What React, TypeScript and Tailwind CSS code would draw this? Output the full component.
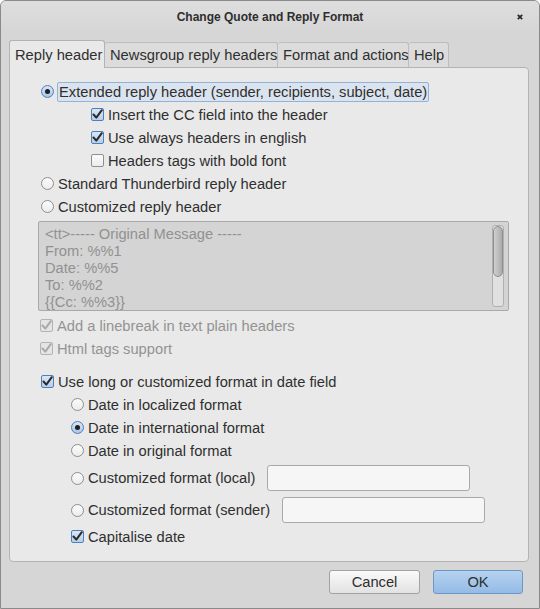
import React from 'react';

const font = "font-['Liberation_Sans',Arial,sans-serif]";

function Check({ checked, disabled }: { checked?: boolean; disabled?: boolean }) {
  const box = disabled
    ? 'border-[#b3b3b3] bg-[#e4e4e4]'
    : checked
      ? 'border-[#4f7fb8] bg-gradient-to-b from-[#d9e6f5] to-[#b7cfea]'
      : 'border-[#8f8f8f] bg-gradient-to-b from-[#fbfbfb] to-[#ececec]';
  return (
    <span className={`flex h-[13px] w-[13px] shrink-0 items-center justify-center rounded-[2px] border ${box}`}>
      {checked && (
        <svg width="11" height="11" viewBox="0 0 11 11">
          <path
            d="M1.5 5.5 L4.3 8.6 L9.8 1.2"
            fill="none"
            stroke={disabled ? '#a9a9a9' : '#2a2a2a'}
            strokeWidth="2"
            strokeLinecap="round"
            strokeLinejoin="round"
          />
        </svg>
      )}
    </span>
  );
}

function Radio({ checked }: { checked?: boolean }) {
  return (
    <span
      className={`flex h-[13px] w-[13px] shrink-0 items-center justify-center rounded-full border ${
        checked
          ? 'border-[#4f7fb8] bg-gradient-to-b from-[#d9e6f5] to-[#a9c6e8]'
          : 'border-[#8f8f8f] bg-gradient-to-b from-[#fbfbfb] to-[#ececec]'
      }`}
    >
      {checked && <span className="h-[5px] w-[5px] rounded-full bg-[#1e1e1e]" />}
    </span>
  );
}

function Row({
  className,
  control,
  children,
  disabled,
}: {
  className: string;
  control: React.ReactNode;
  children: React.ReactNode;
  disabled?: boolean;
}) {
  return (
    <div
      className={`flex h-[23px] items-center gap-[4px] whitespace-nowrap ${className} ${
        disabled ? 'text-[#939393]' : 'text-[#2f2f2f]'
      }`}
    >
      {control}
      {children}
    </div>
  );
}

export default function App() {
  return (
    <div
      className={`flex h-[609px] w-[540px] flex-col overflow-hidden rounded-t-[6px] border border-[#8a8a8a] bg-[#d6d6d6] text-[14.7px] leading-[18px] text-[#2f2f2f] ${font}`}
    >
      {/* title bar */}
      <div className="relative flex h-[31px] shrink-0 items-center justify-center bg-gradient-to-b from-[#dedede] to-[#d6d6d6]">
        <span className="text-[12px] font-bold text-[#2e2e2e]">Change Quote and Reply Format</span>
        <svg className="absolute right-[16px] top-[13px]" width="6" height="6" viewBox="0 0 6 6">
          <path d="M0.8 0.8 L5.2 5.2 M5.2 0.8 L0.8 5.2" stroke="#2b2b2b" strokeWidth="1.8" />
        </svg>
      </div>

      {/* tabs */}
      <div className="ml-[8px] mt-[8px] flex h-[27px] shrink-0 items-end whitespace-nowrap">
        <div className="relative z-10 -mb-px flex h-[28px] w-[96px] items-center rounded-t-[3px] border border-b-0 border-[#b3b3b3] bg-[#e9e9e9] pl-[5px]">
          Reply header
        </div>
        <div className="flex h-[25px] w-[173px] items-center rounded-t-[3px] border border-l-0 border-b-0 border-[#bdbdbd] bg-[#dcdcdc] pl-[5px]">
          Newsgroup reply headers
        </div>
        <div className="flex h-[25px] w-[131px] items-center rounded-t-[3px] border border-l-0 border-b-0 border-[#bdbdbd] bg-[#dcdcdc] pl-[5px]">
          Format and actions
        </div>
        <div className="flex h-[25px] w-[40px] items-center rounded-t-[3px] border border-l-0 border-b-0 border-[#bdbdbd] bg-[#dcdcdc] pl-[5px]">
          Help
        </div>
      </div>

      {/* panel */}
      <div className="ml-[8px] mr-[10px] flex h-[495px] shrink-0 flex-col rounded-b-[4px] rounded-tr-[4px] border border-[#b3b3b3] bg-[#e9e9e9] pt-[12px]">
        <Row className="ml-[31px]" control={<Radio checked />}>
          <span className="-ml-px rounded-[2px] border border-[#8fb3da] bg-[#dbe4ee] px-px">
            Extended reply header (sender, recipients, subject, date)
          </span>
        </Row>
        <Row className="ml-[81px]" control={<Check checked />}>Insert the CC field into the header</Row>
        <Row className="ml-[81px]" control={<Check checked />}>Use always headers in english</Row>
        <Row className="ml-[81px]" control={<Check />}>Headers tags with bold font</Row>
        <Row className="ml-[31px]" control={<Radio />}>Standard Thunderbird reply header</Row>
        <Row className="ml-[31px]" control={<Radio />}>Customized reply header</Row>

        <div className="ml-[28px] mt-[3px] flex h-[90px] w-[471px] rounded-[2px] border border-[#a9a9a9] bg-[#d4d4d4]">
          <div className="flex-1 overflow-hidden pl-[6px] pt-[4px] leading-[17px] text-[#919191]">
            <div>{'<tt>----- Original Message -----'}</div>
            <div>From: %%1</div>
            <div>Date: %%5</div>
            <div>To: %%2</div>
            <div>{'{{Cc: %%3}}'}</div>
          </div>
          <div className="mr-[4px] mt-[3px] flex h-[82px] w-[12px] flex-col rounded-[3px] border border-[#b0b0b0] bg-[#e0e0e0]">
            <div className="h-[51px] rounded-full border border-[#8e8e8e] bg-gradient-to-r from-[#cfcfcf] to-[#acacac]" />
          </div>
        </div>

        <Row className="ml-[30px] mt-[3px]" control={<Check checked disabled />} disabled>
          Add a linebreak in text plain headers
        </Row>
        <Row className="ml-[30px]" control={<Check checked disabled />} disabled>
          Html tags support
        </Row>

        <Row className="ml-[31px] mt-[10px]" control={<Check checked />}>Use long or customized format in date field</Row>
        <Row className="ml-[61px]" control={<Radio />}>Date in localized format</Row>
        <Row className="ml-[61px]" control={<Radio checked />}>Date in international format</Row>
        <Row className="ml-[61px]" control={<Radio />}>Date in original format</Row>
        <div className="ml-[61px] mt-[2px] flex h-[28px] items-center gap-[4px] whitespace-nowrap">
          <Radio />
          <span>Customized format (local)</span>
          <div className="ml-[8px] h-[26px] w-[203px] rounded-[3px] border border-[#a9a9a9] bg-[#f6f6f6]" />
        </div>
        <div className="ml-[61px] mt-[4px] flex h-[28px] items-center gap-[4px] whitespace-nowrap">
          <Radio />
          <span>Customized format (sender)</span>
          <div className="ml-[8px] h-[26px] w-[203px] rounded-[3px] border border-[#a9a9a9] bg-[#f6f6f6]" />
        </div>
        <Row className="ml-[61px] mt-[1px]" control={<Check checked />}>Capitalise date</Row>
      </div>

      {/* buttons */}
      <div className="mr-[16px] mt-[8px] flex justify-end gap-[13px]">
        <button className="flex h-[24px] w-[91px] items-center justify-center rounded-[3px] border border-[#a3a3a3] bg-gradient-to-b from-[#fafafa] to-[#e2e2e2] text-[#2f2f2f]">
          Cancel
        </button>
        <button className="flex h-[24px] w-[90px] items-center justify-center rounded-[3px] border border-[#6f97c6] bg-gradient-to-b from-[#b6d2ef] to-[#94bbe6] text-[#2f2f2f]">
          OK
        </button>
      </div>
    </div>
  );
}
